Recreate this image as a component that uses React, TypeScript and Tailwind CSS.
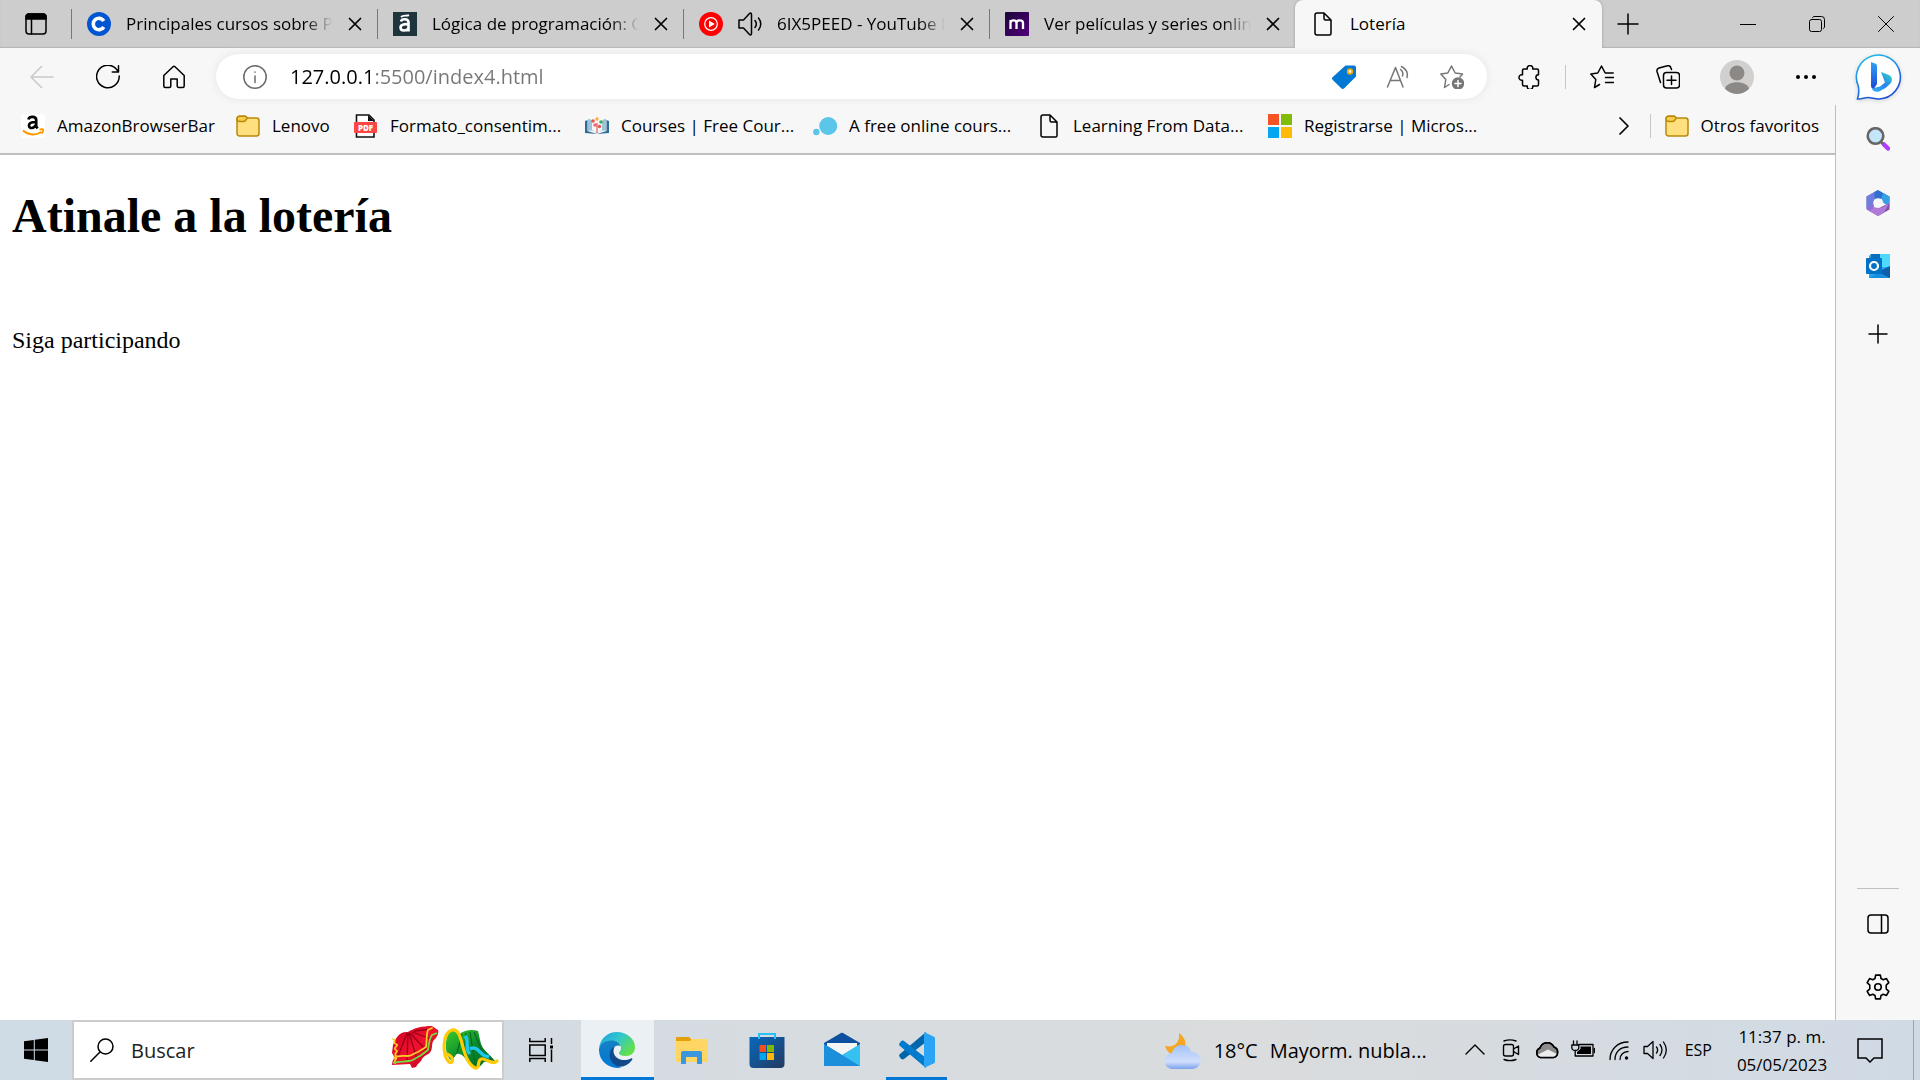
import type { FC, ReactNode } from "react";

interface IconProps {
  children: ReactNode;
  className?: string;
  box?: string;
  width?: number;
}

// Thin outline icon, drawn on a 24px grid unless told otherwise
const Icon: FC<IconProps> = ({
  children,
  className = "size-6",
  box = "0 0 24 24",
  width = 1.5,
}) => (
  <svg
    viewBox={box}
    className={`shrink-0 ${className}`}
    fill="none"
    stroke="currentColor"
    strokeWidth={width}
    strokeLinecap="round"
    strokeLinejoin="round"
    aria-hidden="true"
  >
    {children}
  </svg>
);

const CloseIcon = () => (
  <Icon className="size-[14px]" box="0 0 14 14" width={1.7}>
    <path d="M1.5 1.5l11 11M12.5 1.5l-11 11" />
  </Icon>
);

const PageIcon = () => (
  <Icon>
    <path d="M6 1h7l7 7v13.500a1.500 1.500 0 0 1-1.500 1.500H6a2 2 0 0 1-2-2V3a2 2 0 0 1 2-2z M13 1v5.500a1.500 1.500 0 0 0 1.500 1.500H20" />
  </Icon>
);

const FolderIcon = () => (
  <Icon>
    <path
      d="M1 5v14.500a2.500 2.500 0 0 0 2.500 2.500h17a2.500 2.500 0 0 0 2.500-2.500V6.500A2.500 2.500 0 0 0 20.500 4H11L9.500 2.300H3.500A2.500 2.500 0 0 0 1 5z"
      fill="#ffdf7e"
      stroke="#b88a0c"
    />
    <path
      d="M1 5a2.500 2.500 0 0 1 2.500-2.700h6L11.300 4 9.500 6.500c-.5.700-1 1-2 1h-4A2.500 2.500 0 0 1 1 5z"
      fill="#f8cd4b"
      stroke="#b88a0c"
    />
  </Icon>
);

const CourseraIcon = () => (
  <svg viewBox="0 0 24 24" className="size-6 shrink-0" aria-hidden="true">
    <circle cx="12" cy="12" r="12" fill="#0056d2" />
    <path
      d="M16.800 9A5.700 5.700 0 1 0 16.800 15"
      fill="none"
      stroke="#fff"
      strokeWidth="3.600"
    />
  </svg>
);

const AluraIcon = () => (
  <svg viewBox="0 0 24 24" className="size-6 shrink-0" aria-hidden="true">
    <path d="M0 0h24v24H0z" fill="#1f343d" />
    <path
      d="M8 9.500c.5-3 7.500-3.300 7.500.8V19.500M15.500 12.500c-3-.8-8-.5-8 3 0 4 6.500 3.700 8 .7"
      fill="none"
      stroke="#fff"
      strokeWidth="2.600"
    />
    <path d="M8 5c2.500-2.500 5-.5 8-1.800" fill="none" stroke="#fff" strokeWidth="1.800" />
  </svg>
);

const YouTubeMusicIcon = () => (
  <svg viewBox="0 0 24 24" className="size-6 shrink-0" aria-hidden="true">
    <circle cx="12" cy="12" r="12" fill="#f00" />
    <circle cx="12" cy="12" r="6.300" fill="none" stroke="#fff" strokeWidth="1.200" />
    <path d="M10 8.500l5.800 3.500-5.800 3.500z" fill="#fff" />
  </svg>
);

const MovieIcon = () => (
  <svg viewBox="0 0 24 24" className="size-6 shrink-0" aria-hidden="true">
    <defs>
      <linearGradient id="movie" x1="0" y1="0" x2="1" y2="1">
        <stop offset="0" stopColor="#1a0638" />
        <stop offset="1" stopColor="#52007a" />
      </linearGradient>
    </defs>
    <rect width="24" height="24" rx="1" fill="url(#movie)" />
    <path
      d="M5.500 17V8M5.500 11c0-3.500 6-3.500 6 0v6M11.500 11c0-3.500 6.500-3.500 6.500 0v6"
      fill="none"
      stroke="#fff"
      strokeWidth="2.300"
    />
  </svg>
);

const SpeakerIcon = () => (
  <Icon className="size-6">
    <path d="M1 8v8h4.500l6 6.500c1 1 2 .5 2-1V2.500c0-1.500-1-2-2-1L5.500 8zM17 8.500c1.500 2 1.500 5 0 7M20.500 6c3 3.500 3 8.500 0 12" />
  </Icon>
);

const AmazonIcon = () => (
  <svg viewBox="0 0 24 24" className="size-6 shrink-0" aria-hidden="true">
    <rect width="24" height="24" rx="3" fill="#fff" />
    <path
      d="M7.500 5.500C8 2 15.200 1.800 15.200 6v6.500l1.500 1.800M14.500 8C10 8 8 9 8 11.500c0 3.500 5 3.200 6.700-.3"
      fill="none"
      stroke="#000"
      strokeWidth="2.700"
    />
    <path
      d="M2 16.500c5.500 5 13 5 18.500 1.500M18.500 15.500c2.500-.6 4-.4 3.700.3-.2 1.200-.7 2.700-1.400 3.600"
      fill="none"
      stroke="#f90"
      strokeWidth="1.900"
    />
  </svg>
);

const PdfIcon = () => (
  <svg viewBox="0 0 24 24" className="size-6 shrink-0" aria-hidden="true">
    <path
      d="M2.500 1h12.500l5 5v17H2.500z"
      fill="#fff"
      stroke="#111"
      strokeWidth="1.600"
    />
    <path d="M14 1v6h6z" fill="#111" />
    <rect y="8" width="23" height="11" rx="1" fill="#f44" />
    <text
      x="11.500"
      y="16.500"
      textAnchor="middle"
      className="fill-white font-['Open_Sans',sans-serif] text-[8px] font-extrabold"
    >
      PDF
    </text>
  </svg>
);

const CoursesIcon = () => (
  <svg viewBox="0 0 24 24" className="size-6 shrink-0" aria-hidden="true">
    <path d="M0 7l2.500-1v11l9.500 3 9.500-3V6L24 7v12l-12 1-12-1z" fill="#2f6d94" />
    <path d="M3 5c2 0 3 .5 4 2v9l5 3 5-3V7c1-1.500 2-2 4-2v12c-3-1-6 0-9 2.500C9 17 6 16 3 17z" fill="#9cc4da" />
    <circle cx="8" cy="7" r="1.800" fill="#e8574d" />
    <circle cx="12" cy="5" r="1.700" fill="#f0b23a" />
    <circle cx="16" cy="8" r="1.800" fill="#48a868" />
    <circle cx="10" cy="11" r="1.800" fill="#ee6a7e" />
    <circle cx="14.500" cy="12.500" r="1.700" fill="#e8574d" />
    <path d="M12 19V9" stroke="#d8443c" />
  </svg>
);

const BubbleIcon = () => (
  <svg viewBox="0 0 24 24" className="size-6 shrink-0" aria-hidden="true">
    <circle cx="15.200" cy="12" r="9" fill="#5bc5ea" />
    <circle cx="3.300" cy="18" r="3.200" fill="#5bc5ea" />
  </svg>
);

const MicrosoftIcon = () => (
  <svg viewBox="0 0 24 24" className="size-6 shrink-0" aria-hidden="true">
    <path d="M0 0h11v11H0z" fill="#f35325" />
    <path d="M13 0h11v11H13z" fill="#81bc06" />
    <path d="M0 13h11v11H0z" fill="#05a6f0" />
    <path d="M13 13h11v11H13z" fill="#ffba08" />
  </svg>
);

const BingIcon = () => (
  <svg viewBox="0 0 48 48" className="size-12 drop-shadow-sm" aria-hidden="true">
    <defs>
      <linearGradient id="bing-ring" x1="0" y1="0" x2="0.500" y2="1">
        <stop offset="0" stopColor="#22c8ee" />
        <stop offset="1" stopColor="#1b4fd8" />
      </linearGradient>
      <linearGradient id="bing-stem" x1="0" y1="0" x2="0" y2="1">
        <stop offset="0" stopColor="#31a3fa" />
        <stop offset="1" stopColor="#1a47d6" />
      </linearGradient>
      <linearGradient id="bing-bowl" x1="1" y1="0" x2="0" y2="1">
        <stop offset="0" stopColor="#2fdcc0" />
        <stop offset="0.500" stopColor="#2b84ee" />
        <stop offset="1" stopColor="#38b6f5" />
      </linearGradient>
    </defs>
    <path
      d="M2.500 46c1.500-5 1.800-8 .8-13A22 22 0 1 1 24 46c-4 .3-7-1.500-11-1.500-4 0-6 2-10.500 1.500z"
      fill="#fff"
      stroke="url(#bing-ring)"
      strokeWidth="1.600"
    />
    <path d="M26 19l8 3c4 2 3.500 7 1 9l-4.500 4-6.500 3.500c-4 1-7-1-7-3l8-2 5-4z" fill="url(#bing-bowl)" />
    <path d="M16 9l4 1.500c1.800.7 2 1.500 2 3V31l-3 4.500c-2 .5-3-1-3-3z" fill="url(#bing-stem)" />
  </svg>
);

interface TabProps {
  title: string;
  icon: ReactNode;
  sound?: boolean;
}

const tabs: TabProps[] = [
  { title: "Principales cursos sobre Pr", icon: <CourseraIcon /> },
  { title: "Lógica de programación: C", icon: <AluraIcon /> },
  { title: "6IX5PEED - YouTube M", icon: <YouTubeMusicIcon />, sound: true },
  { title: "Ver películas y series online", icon: <MovieIcon /> },
];

const Tab: FC<TabProps> = ({ title, icon, sound }) => (
  <div className="flex w-[306px] items-center py-[9px]">
    <span className="h-[30px] w-px bg-[#777]" />
    <div className="flex min-w-0 flex-1 items-center gap-[15px] pl-[15px] pr-[15px]">
      {icon}
      {sound && <SpeakerIcon />}
      <button className="min-w-0 flex-1 overflow-hidden whitespace-nowrap text-left [mask-image:linear-gradient(to_right,black_86%,transparent)]">
        {title}
      </button>
      <button aria-label="Cerrar pestaña">
        <CloseIcon />
      </button>
    </div>
  </div>
);

const TabStrip = () => (
  <div className="flex h-12 bg-[#cdcdcd] shadow-[inset_0_-1px_1px_#b5b5b5]">
    <button className="flex w-[71px] items-center pl-[25px]" aria-label="Menú de pestañas">
      <Icon className="size-[22px]" box="0 0 22 22">
        <rect x="1" y="1" width="20" height="20" rx="3" />
        <path d="M1 6V4a3 3 0 0 1 3-3h14a3 3 0 0 1 3 3v2z" fill="currentColor" />
        <path d="M6.500 6v15" />
      </Icon>
    </button>
    {tabs.map((tab) => (
      <Tab key={tab.title} {...tab} />
    ))}
    {/* Active tab */}
    <div className="flex w-[307px] items-center gap-[15px] rounded-t-lg bg-[#f7f7f7] pl-4 pr-4 shadow-[0_0_3px_#999] [clip-path:inset(0_-4px)]">
      <PageIcon />
      <button className="flex-1 text-left">Lotería</button>
      <button aria-label="Cerrar pestaña">
        <CloseIcon />
      </button>
    </div>
    <button className="flex w-[52px] items-center justify-center" aria-label="Nueva pestaña">
      <Icon className="size-[22px]" box="0 0 22 22">
        <path d="M11 1v20M1 11h20" />
      </Icon>
    </button>
    <div className="ml-auto flex">
      <button className="flex w-[69px] items-center justify-center" aria-label="Minimizar">
        <Icon className="size-4" box="0 0 16 16" width={1}>
          <path d="M0 8.500h16" />
        </Icon>
      </button>
      <button className="flex w-[69px] items-center justify-center" aria-label="Restaurar">
        <Icon className="size-4" box="0 0 16 16" width={1}>
          <rect x="0.500" y="3.500" width="12" height="12" rx="2" />
          <path d="M3.500 1.500a3 3 0 0 1 1.500-1h7.500a3 3 0 0 1 3 3V11a3 3 0 0 1-1 1.500" />
        </Icon>
      </button>
      <button className="flex w-[69px] items-center justify-center" aria-label="Cerrar">
        <Icon className="size-4" box="0 0 16 16" width={1}>
          <path d="M.5.5l15 15M15.500.5l-15 15" />
        </Icon>
      </button>
    </div>
  </div>
);

const Toolbar = () => (
  <div className="flex h-[57px] items-center bg-[#f7f7f7]">
    <div className="flex w-[216px] gap-[42px] pl-[30px]">
      <button className="text-[#c9c9c9]" aria-label="Atrás">
        <Icon>
          <path d="M23 12H1M11.500 1.500L1 12l10.500 10.500" />
        </Icon>
      </button>
      <button aria-label="Actualizar">
        <Icon>
          <path d="M21.500 5.500A11.300 11.300 0 1 0 23.200 11M22.500.8v6.200h-6.200" />
        </Icon>
      </button>
      <button aria-label="Inicio">
        <Icon>
          <path d="M1.800 10.500L11 1.800a1.500 1.500 0 0 1 2 0l9.200 8.700V21a1.500 1.500 0 0 1-1.500 1.500h-4A1.500 1.500 0 0 1 15.200 21v-7H8.800v7a1.500 1.500 0 0 1-1.500 1.500h-4A1.500 1.500 0 0 1 1.800 21z" />
        </Icon>
      </button>
    </div>
    <div className="flex h-[45px] flex-1 items-center rounded-full bg-white pl-[27px] pr-[23px] shadow-[0_0_8px_#e4e4e4]">
      <button className="text-[#6b6b6b]" aria-label="Información del sitio">
        <Icon>
          <circle cx="12" cy="12" r="11.200" />
          <path d="M12 11v6.500M12 7v.3" />
        </Icon>
      </button>
      <input
        aria-label="Dirección"
        defaultValue="127.0.0.1:5500/index4.html"
        className="ml-[23px] min-w-0 flex-1 bg-linear-to-r from-black from-[80px] to-[#767676] to-[80px] bg-clip-text text-xl text-transparent outline-none"
      />
      <div className="flex items-center gap-[30px] text-[#767676]">
        <button aria-label="Ofertas">
          <svg viewBox="0 0 24 24" className="size-6">
            <path
              d="M13.500.5H22a2 2 0 0 1 2 2v9L12 23.500a2 2 0 0 1-2.500 0L.8 15a2 2 0 0 1 0-3z"
              fill="#0078d4"
            />
            <circle cx="18" cy="6.500" r="2.300" fill="#fff" stroke="#f2a600" strokeWidth="1.800" />
          </svg>
        </button>
        <button aria-label="Leer en voz alta">
          <Icon>
            <path d="M1.500 22L9.500 2.500 17 22M4.500 15.500h10M14.500 4.500c2 1.500 2.800 4 2 6.500M15.500 1.500c5 2.500 7 7 5.500 11" />
          </Icon>
        </button>
        <button aria-label="Agregar a favoritos">
          <Icon>
            <path d="M9 19.500L4.500 22.500l1.300-8L.8 9l7-1L11.500 1l3.700 7 7.300 1-2.500 3" />
            <circle cx="18" cy="18.500" r="6.200" fill="currentColor" stroke="none" />
            <path d="M18 15.500v6M15 18.500h6" stroke="#fff" />
          </Icon>
        </button>
      </div>
    </div>
    <div className="flex w-[433px] items-center">
      <button className="ml-[31px]" aria-label="Extensiones">
        <Icon>
          <path d="M8 4h1.300a2.800 2.800 0 1 1 5.400 0H19a1.500 1.500 0 0 1 1.500 1.500v4.200a2.600 2.600 0 1 0 0 5.200v4.600A1.500 1.500 0 0 1 19 21h-4.300a2.800 2.800 0 1 1-5.400 0H6a1.500 1.500 0 0 1-1.500-1.500v-4.300a2.800 2.800 0 1 1 0-5.400V5.500A1.500 1.500 0 0 1 6 4z" />
        </Icon>
      </button>
      <span className="ml-[23px] h-6 w-px bg-[#c6c6c6]" />
      <button className="ml-6" aria-label="Favoritos">
        <Icon>
          <path d="M9.500 19.500L4.500 22.500l1.300-8L.8 9l7-1L11.500 1l3.700 7h8M15.500 12.500h8M15.500 17.500h8" />
        </Icon>
      </button>
      <button className="ml-[42px]" aria-label="Colecciones">
        <Icon>
          <rect x="7.500" y="7.500" width="16" height="15.500" rx="3" />
          <path d="M15.500 11v8.500M11 15.200h9M4.500 17.500L1 6.500A3 3 0 0 1 3 3l8.500-2.200A3 3 0 0 1 15 3l.5 1.500" />
        </Icon>
      </button>
      <button className="ml-10" aria-label="Perfil">
        <svg viewBox="0 0 34 34" className="size-[34px] rounded-full">
          <path d="M0 0h34v34H0z" fill="#d2d0ce" />
          <circle cx="17" cy="13" r="7.500" fill="#8b8886" />
          <path d="M5 29c1-9 23-9 24 0a17 17 0 0 1-24 0z" fill="#8b8886" />
        </svg>
      </button>
      <button className="ml-10" aria-label="Configuración y más">
        <Icon width={0}>
          <g fill="currentColor">
            <circle cx="4" cy="12" r="2" />
            <circle cx="12" cy="12" r="2" />
            <circle cx="20" cy="12" r="2" />
          </g>
        </Icon>
      </button>
      <button className="ml-[37px]" aria-label="Bing">
        <BingIcon />
      </button>
    </div>
  </div>
);

const bookmarks = [
  { label: "AmazonBrowserBar", icon: <AmazonIcon />, width: "w-[215px]" },
  { label: "Lenovo", icon: <FolderIcon />, width: "w-[118px]" },
  { label: "Formato_consentim...", icon: <PdfIcon />, width: "w-[231px]" },
  { label: "Courses | Free Cour...", icon: <CoursesIcon />, width: "w-[228px]" },
  { label: "A free online cours...", icon: <BubbleIcon />, width: "w-[224px]" },
  { label: "Learning From Data...", icon: <PageIcon />, width: "w-[231px]" },
  { label: "Registrarse | Micros...", icon: <MicrosoftIcon />, width: "w-[230px]" },
];

const BookmarksBar = () => (
  <nav className="flex h-[50px] items-center border-b-2 border-[#bfbfbf] bg-[#f7f7f7] pb-1.5 pl-[21px] pr-4">
    {bookmarks.map(({ label, icon, width }) => (
      <a key={label} href="#" className={`flex items-center gap-3 whitespace-nowrap ${width}`}>
        {icon}
        {label}
      </a>
    ))}
    <button className="ml-auto" aria-label="Más favoritos">
      <Icon className="size-5" box="0 0 20 20" width={1.7}>
        <path d="M6 2l8 8-8 8" />
      </Icon>
    </button>
    <span className="ml-4 mr-3.5 h-6 w-px bg-[#c6c6c6]" />
    <a href="#" className="flex items-center gap-3 whitespace-nowrap">
      <FolderIcon />
      Otros favoritos
    </a>
  </nav>
);

const Sidebar = () => (
  <aside className="flex w-[85px] flex-col items-center border-l border-[#bfbfbf] bg-[#f7f7f7] pb-5 pt-[22px]">
    <button aria-label="Buscar">
      <svg viewBox="0 0 24 24" className="size-6">
        <path d="M18 17.500l4 4" stroke="#b13cff" strokeWidth="4.500" strokeLinecap="round" />
        <path d="M15 15l2 2" stroke="#666" strokeWidth="2.500" />
        <circle cx="9.500" cy="9" r="7.800" fill="#c4e6fb" stroke="#666" strokeWidth="2.600" />
      </svg>
    </button>
    <button className="mt-[39px]" aria-label="Microsoft 365">
      <svg viewBox="0 0 26 26" className="size-[26px]">
        <path d="M13 0L1.500 6.500v13L7 22.500 9 17V9l3-7z" fill="#8c6fd8" />
        <path d="M13 0L9.500 2v9l-8 8V6.500z" fill="#6d7ede" />
        <path d="M13 0l11.500 6.500v6l-8-4L9.500 11V2z" fill="#2f6fd0" />
        <path d="M18 3l6.500 3.500v10l-6-3.500-2-4.500z" fill="#36a0e4" />
        <path d="M24.500 13v6.500L13 26l-6-3.500 9-5.500z" fill="#8250a8" />
        <path d="M4.500 21.200l4.500-4 8 .3 7.500-4.500-6 10L13 26z" fill="#b07bd8" />
        <circle cx="13" cy="13" r="4.800" fill="#f7f7f7" />
      </svg>
    </button>
    <button className="mt-[38px]" aria-label="Outlook">
      <svg viewBox="0 0 24 24" className="size-6">
        <path d="M5 0h19v24H3V2z" fill="#28a8ea" />
        <path d="M5 0h9v7H5z" fill="#0a6ebd" />
        <path d="M14 0h10v13H14z" fill="#50d9ff" />
        <path d="M24 12v12H3z" fill="#1490df" />
        <path d="M24 12L12 18l12 6z" fill="#0f5ea8" />
        <rect y="4" width="16" height="16" rx="1" fill="#0072c6" />
        <circle cx="8" cy="12" r="4" fill="none" stroke="#fff" strokeWidth="2.200" />
      </svg>
    </button>
    <button className="mt-[46px]" aria-label="Agregar">
      <Icon className="size-5" box="0 0 20 20">
        <path d="M10 1v18M1 10h18" />
      </Icon>
    </button>
    <span className="mt-auto h-px w-[42px] bg-[#bfbfbf]" />
    <button className="mt-[23px]" aria-label="Ocultar barra lateral">
      <Icon>
        <rect x="2" y="3" width="20" height="18" rx="3" />
        <path d="M15.500 3v18" />
      </Icon>
    </button>
    <button className="mt-[38px]" aria-label="Configuración">
      <Icon className="size-[26px]">
        <circle cx="12" cy="12" r="3" />
        <path d="M9.800 1h4.400l.6 3.200 2 1.100 3-1.100L22 8l-2.400 2.200v3.600L22 16l-2.200 3.800-3-1.100-2 1.100-.6 3.200H9.800l-.6-3.200-2-1.100-3 1.100L2 16l2.400-2.200v-3.600L2 8l2.200-3.800 3 1.100 2-1.100z" />
      </Icon>
    </button>
  </aside>
);

// Folkloric skirts shown inside the search box
const SearchArt = () => (
  <svg viewBox="0 0 110 50" className="h-[50px] w-[110px] shrink-0" aria-hidden="true">
    <defs>
      <linearGradient id="skirt-red" x1="0" y1="0" x2="1" y2="1">
        <stop offset="0" stopColor="#c8001e" />
        <stop offset="0.500" stopColor="#f0122f" />
        <stop offset="1" stopColor="#b3001b" />
      </linearGradient>
      <linearGradient id="skirt-green" x1="0" y1="0" x2="1" y2="1">
        <stop offset="0" stopColor="#3ecb2c" />
        <stop offset="0.500" stopColor="#0a8a2a" />
        <stop offset="1" stopColor="#04662a" />
      </linearGradient>
    </defs>
    {/* Red skirt */}
    <path
      d="M3 20C6 12 10 6 18 7c6-4 14-6 24-6l6 4c1 3-1 7-3 9-4 3-2 7-4 12-2 4-7 4-9 8-1 3-4 4-6 8l-4 1-2-4c-6 0-12 1-18 1 0-3 1-6 3-7l-3-5 1-8z"
      fill="url(#skirt-red)"
    />
    <path
      d="M17 8L7 34M18 8l-1 28M19 8l8 26M20 8l16 17M22 7l19 7M24 6l17-2"
      stroke="#9a0018"
      strokeWidth="1.300"
    />
    <path
      d="M3 14c4 1-1 4 3 5s-4 4 0 6c3 1-3 4 0 6s-3 4-1 7M4 33c4-3 8-2 14-2 4 0 6-3 10-4l8-5c1-5 0-12 2-17l4-2"
      fill="none"
      stroke="#ffc928"
      strokeWidth="1.800"
      strokeLinecap="round"
    />
    <path
      d="M3 38c6-2 11-1 16-2 4 0 6-3 11-5l8-6c1-6 1-11 4-15l5-2"
      fill="none"
      stroke="#74dd43"
      strokeWidth="1.800"
    />
    {/* Green skirt */}
    <path
      d="M58 10c3-7 9-5 11-1 6-4 13-5 19-3 2 7 2 12 5 17 4 5 8 8 12 13-3 2-8 0-11 1-4 5-6 6-10 5-7-2-9-13-15-13-3-1-4 3-7 7-6-3-8-18-4-26z"
      fill="url(#skirt-green)"
    />
    <path d="M72 9l-5 19M76 8l-2 22M80 7l5 32M84 7l12 29" stroke="#056b25" strokeWidth="1.200" />
    <path
      d="M75 11c5 5-1 13 5 18M80 24c7-4 10 5 15 7l4 1"
      fill="none"
      stroke="#1fc8ee"
      strokeWidth="3.400"
    />
    <path
      d="M57 29c8 3 6 11 2 8-7-7-7-29 3-32 12-3 8 30 23 38 6 1 1-10 8-9 5 1 10 6 14 2"
      fill="none"
      stroke="#ffcb05"
      strokeWidth="3.200"
      strokeLinecap="round"
    />
  </svg>
);

const EdgeIcon = () => (
  <svg viewBox="0 0 36 36" className="size-9" aria-hidden="true">
    <defs>
      <linearGradient id="edge-top" x1="0" y1="0" x2="1" y2="0.600">
        <stop offset="0" stopColor="#1b9de0" />
        <stop offset="0.500" stopColor="#30c6cf" />
        <stop offset="1" stopColor="#62e04a" />
      </linearGradient>
      <linearGradient id="edge-side" x1="0" y1="0" x2="0" y2="1">
        <stop offset="0" stopColor="#1580c4" />
        <stop offset="1" stopColor="#0078d8" />
      </linearGradient>
    </defs>
    <path
      d="M0 17C1 6 9 0 18 0c10 0 18 7 18 15 0 6-4 9-9 9-4 0-7-1-7-3 0-1 2-2 2-5 0-4-4-7-9-7-7 0-12 4-13 8z"
      fill="url(#edge-top)"
    />
    <path
      d="M0 17C1 12 6 8.500 12.500 8.500c5 0 8 2.500 9 5.500-5-2-9 2-9 8 0 7 5 12 10 13.500C11 38-.5 30 0 17z"
      fill="url(#edge-side)"
    />
    <path
      d="M16 14c-6 3-7 11-3 16 5 7 14 6 20-2 1-1 0-2-1-1.500-8 4-17 0-17.500-7 0-2 .5-4 1.500-5.500z"
      fill="#114a8b"
    />
  </svg>
);

const ExplorerIcon = () => (
  <svg viewBox="0 0 36 36" className="size-9" aria-hidden="true">
    <path d="M2 6a1 1 0 0 1 1-1h12l2 2v4H2z" fill="#e3a008" />
    <path d="M2 9h14l2-2h15a1 1 0 0 1 1 1v21a1 1 0 0 1-1 1H3a1 1 0 0 1-1-1z" fill="#ffd564" />
    <path d="M7 32V21a2 2 0 0 1 2-2h17a2 2 0 0 1 2 2v11h-5v-7H12v7z" fill="#3a96dd" />
  </svg>
);

const StoreIcon = () => (
  <svg viewBox="0 0 36 36" className="size-9" aria-hidden="true">
    <defs>
      <linearGradient id="store" x1="0" y1="0" x2="1" y2="1">
        <stop offset="0" stopColor="#0669bd" />
        <stop offset="1" stopColor="#243a5e" />
      </linearGradient>
    </defs>
    <path d="M.5 5h35v27a4 4 0 0 1-4 4h-27a4 4 0 0 1-4-4z" fill="url(#store)" />
    <path d="M10 7V2h16v5" fill="none" stroke="#28c1f5" strokeWidth="2" />
    <path d="M10.500 13H17v7h-6.500z" fill="#f25022" />
    <path d="M18 13h7v7h-7z" fill="#7fba00" />
    <path d="M10.500 21H17v7h-6.500z" fill="#00a4ef" />
    <path d="M18 21h7v7h-7z" fill="#ffb900" />
  </svg>
);

const MailIcon = () => (
  <svg viewBox="0 0 36 36" className="size-9" aria-hidden="true">
    <path d="M0 11L17 1a2 2 0 0 1 2 0l17 10v8H0z" fill="#0f4fa0" />
    <path d="M3 11h30v10L18 26 3 21z" fill="#f5f5f5" />
    <path d="M0 12l18 11-18 11z" fill="#1c9ae0" />
    <path d="M36 12L0 34h36z" fill="#35c1f1" />
    <path d="M0 12l36 22H0z" fill="#1b8fdc" />
  </svg>
);

const CodeIcon = () => (
  <svg viewBox="0 0 36 36" className="size-9" aria-hidden="true">
    <path d="M27 0v10L5 27c-1 .6-2 .5-3-.3L.7 25c-.8-1-.7-2 0-2.700z" fill="#0065a9" />
    <path d="M27 36V26L5 9C4 8.400 3 8.500 2 9.300L.7 11c-.8 1-.7 2 0 2.700z" fill="#007acc" />
    <path d="M26 .4l8.500 4c1 .5 1.500 1 1.500 2.300v22.600c0 1.300-.5 1.800-1.500 2.300l-8.500 4c-.6.3-1 0-1-1V1.400c0-1 .4-1.300 1-1z" fill="#2aa4f4" />
  </svg>
);

const WeatherIcon = () => (
  <svg viewBox="0 0 38 38" className="size-[38px] shrink-0" aria-hidden="true">
    <defs>
      <linearGradient id="cloud" x1="0" y1="0" x2="0" y2="1">
        <stop offset="0" stopColor="#a3c3f7" />
        <stop offset="0.700" stopColor="#cfdefb" />
        <stop offset="1" stopColor="#7ea2ee" />
      </linearGradient>
    </defs>
    <path d="M15 1c8 5 9 16 1 22-6 2-13-2-15-9 9 2 15-3 14-13z" fill="#f5a623" />
    <path
      d="M9 37a8 8 0 0 1-1-16c1-5 5-8 10-8s8 3 9.500 7A8.500 8.500 0 1 1 29 37z"
      fill="url(#cloud)"
    />
  </svg>
);

const apps = [
  { name: "Explorador de archivos", icon: <ExplorerIcon />, open: false },
  { name: "Microsoft Store", icon: <StoreIcon />, open: false },
  { name: "Correo", icon: <MailIcon />, open: false },
  { name: "Visual Studio Code", icon: <CodeIcon />, open: true },
];

const Taskbar = () => (
  <footer className="flex h-[60px] bg-linear-to-r from-[#cfdbe5] via-[#dadcdd] via-65% to-[#d0dae5]">
    <button className="flex w-[72px] items-center justify-center" aria-label="Inicio">
      <svg viewBox="0 0 24 24" className="size-6">
        <path d="M0 3.300l9.800-1.300v9.500H0zM10.800 1.800L24 0v11.500H10.800zM0 12.500h9.800V22L0 20.700zM10.800 12.500H24V24l-13.200-1.800z" />
      </svg>
    </button>
    <label className="flex w-[432px] items-center border-2 border-[#ccc] bg-white pl-4 pr-0.5">
      <Icon>
        <circle cx="15.500" cy="8.500" r="7.500" />
        <path d="M10 14L.8 23.200" />
      </Icon>
      <input
        aria-label="Buscar"
        placeholder="Buscar"
        className="ml-[17px] min-w-0 flex-1 pt-0.5 text-xl outline-none placeholder:text-[#222]"
      />
      <SearchArt />
    </label>
    <button className="flex w-[77px] items-center justify-center pr-1" aria-label="Vista de tareas">
      <Icon>
        <g strokeLinecap="butt" strokeLinejoin="miter">
          <path d="M.8 0v3.500h15.400V0M.8 7h15.400v10.500H.8zM.8 24v-3.500h15.400V24M22.500 0v6M22.500 11.500V24" />
          <path d="M21 7.500h3v3h-3z" fill="currentColor" stroke="none" />
        </g>
      </Icon>
    </button>
    <button
      className="flex w-[73px] items-center justify-center border-b-3 border-[#0078d7] bg-[#ebf0f4] pr-0.5 pt-[3px]"
      aria-label="Microsoft Edge"
    >
      <EdgeIcon />
    </button>
    <div className="flex gap-3.5 pl-[7px]">
      {apps.map(({ name, icon, open }) => (
        <button
          key={name}
          aria-label={name}
          className={`flex w-[61px] items-center justify-center border-b-3 pt-[3px] ${
            open ? "border-[#0078d7]" : "border-transparent"
          }`}
        >
          {icon}
        </button>
      ))}
    </div>
    <div className="ml-auto flex items-center">
      <button className="mr-9 flex items-center gap-3 whitespace-nowrap pt-0.5 text-xl">
        <WeatherIcon />
        <span>18°C</span>
        <span>Mayorm. nubla...</span>
      </button>
      <div className="flex items-center gap-3">
        <Icon width={1.4}>
          <path d="M3 16l9-9 9 9" />
        </Icon>
        <Icon width={1.4}>
          <rect x="4.500" y="6.500" width="10" height="11.500" rx="2" />
          <path d="M14.500 11l5-3v8.500l-5-3M5 3c4-1.500 8-1.500 12 0M5 21.500c4 1.500 8 1.500 12 0" />
        </Icon>
        <Icon>
          <path
            d="M5.500 19.500a5 5 0 0 1-.5-9.500 7.500 7.500 0 0 1 14-1 5.500 5.500 0 0 1-.5 10.500z"
            fill="#8b8b8b"
          />
          <path d="M2 17l11-5.500 10 5-4 3H5.500z" fill="#ececec" stroke="none" />
          <path d="M5.500 19.500a5 5 0 0 1-.5-9.500 7.500 7.500 0 0 1 14-1 5.500 5.500 0 0 1-.5 10.500z" />
        </Icon>
        <Icon width={1.3}>
          <path d="M8 6.500h14v11.500H5M23.500 10.500v4M2.500 3v4M6 3v4M.8 7h7v2.500a3 3 0 0 1-3 3h-1a3 3 0 0 1-3-3zM4.200 12.500V18" />
          <path d="M9.500 8.500h10.500v7.500H6v-2l3.500-3z" fill="currentColor" stroke="none" />
        </Icon>
        <Icon width={1.3}>
          <path d="M3 21.500C3 12 10 4 21 4M8 21.500C8 14 13 9 21 9M13 21.500c0-4.500 3.500-8 8-8" />
          <circle cx="19.500" cy="20" r="1.700" fill="currentColor" stroke="none" />
        </Icon>
        <Icon width={1.3}>
          <path d="M1 8.500v7h3.500l5.500 5v-17l-5.500 5zM13.500 9c1.500 2 1.500 4 0 6M17 6.500c2.500 3.500 2.500 7.500 0 11M20.500 4c3.500 5 3.500 11 0 16" />
        </Icon>
      </div>
      <span className="ml-[18px] text-base">ESP</span>
      <button className="ml-[22px] w-[96px] whitespace-nowrap pt-px text-center leading-7">
        11:37 p. m.
        <br />
        05/05/2023
      </button>
      <button className="ml-[27px] mr-[30px]" aria-label="Notificaciones">
        <Icon className="size-[26px]" box="0 0 26 26">
          <path d="M1 2h24v19h-8l-4 4-4-4H1z" strokeLinejoin="miter" />
        </Icon>
      </button>
      <span className="mr-1.5 h-[60px] w-px bg-[#9aa5b1]" />
    </div>
  </footer>
);

const App = () => (
  <div className="flex min-h-screen flex-col bg-white font-['Open_Sans','Noto_Sans',sans-serif] text-[17px] leading-6 text-black">
    <TabStrip />
    <Toolbar />
    <div className="flex flex-1">
      <div className="min-w-0 flex-1">
        <BookmarksBar />
        <main className="px-3 font-['Liberation_Serif',serif] text-2xl">
          <h1 className="pt-[33px] text-5xl font-bold leading-14">Atinale a la lotería</h1>
          <p className="mt-20">Siga participando</p>
        </main>
      </div>
      <Sidebar />
    </div>
    <Taskbar />
  </div>
);

export default App;
